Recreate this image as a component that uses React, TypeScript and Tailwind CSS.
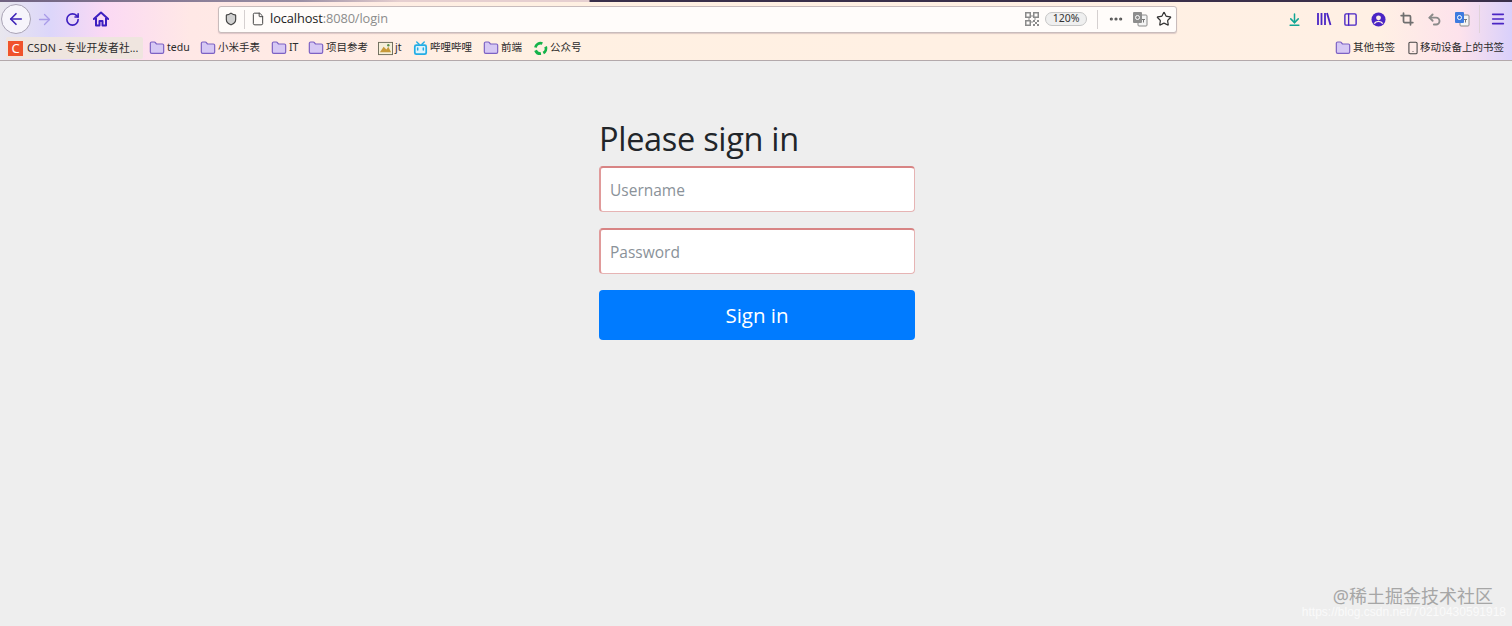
import React from 'react';
import {
  ArrowDownToLine,
  ArrowLeft,
  ArrowRight,
  Crop,
  Ellipsis,
  File,
  Folder,
  Menu,
  PanelLeft,
  RotateCw,
  Shield,
  Smartphone,
  Star,
  Undo2,
} from 'lucide-react';

const zh = { fontFamily: '"Noto Sans", "Noto Sans CJK SC", sans-serif' };

function FolderIcon() {
  return <Folder size={16} strokeWidth={1.8} className="shrink-0 fill-[#d6c8f4] text-[#7d62c4]" />;
}

function HomeIcon() {
  return (
    <svg width="16" height="16" viewBox="0 0 16 16" className="ml-[13px] shrink-0" fill="none" stroke="#3d1fc0" strokeWidth="2">
      <path d="M0.800 8L8 1.500 15.200 8" strokeLinecap="round" strokeLinejoin="round" />
      <path d="M3 7v7.500h3.500V10h3v4.500H13V7" strokeLinejoin="round" />
    </svg>
  );
}

function TranslateIcon({ blue }: { blue?: boolean }) {
  return (
    <svg width="16" height="16" viewBox="0 0 16 16" className="shrink-0">
      <rect x="6" y="4" width="9" height="11" rx="1" fill="#f4f4f4" stroke="#8a8a8a" />
      <rect x="1" y="1" width="9" height="11" rx="1" fill={blue ? '#3d7be0' : '#8d8d8d'} />
      <circle cx="5.5" cy="6.5" r="2" fill="none" stroke="#fff" strokeWidth="1" />
      <path d="M10 8.500h3M11.500 8.500v3" stroke="#777" strokeWidth="1" fill="none" />
    </svg>
  );
}

function QrIcon() {
  return (
    <svg width="14" height="14" viewBox="0 0 14 14" className="shrink-0" fill="#8b8b8b">
      <path d="M0 0h6v6H0zM1.500 1.500v3h3v-3zM8 0h6v6H8zM9.500 1.500v3h3v-3zM0 8h6v6H0zM1.500 9.500v3h3v-3zM8 8h2v2H8zM12 8h2v2h-2zM10 10h2v2h-2zM8 12h2v2H8zM12 12h2v2h-2zM6.500 3h1v2h-1zM3 6.500h2v1H3zM9 6.500h2v1H9zM6.500 9h1v2h-1z" />
    </svg>
  );
}

function LibraryIcon() {
  return (
    <svg width="16" height="16" viewBox="0 0 16 16" className="shrink-0" fill="none" stroke="#4a25c4" strokeWidth="1.800">
      <path d="M2 2v12M5.500 2v12M9 2v12M11 2l3.500 12" />
    </svg>
  );
}

function UserIcon() {
  return (
    <svg width="15" height="15" viewBox="0 0 16 16" className="shrink-0">
      <circle cx="8" cy="8" r="7.500" fill="#4a25c4" />
      <circle cx="8" cy="6.200" r="2.600" fill="#fdeee6" />
      <path d="M3.500 12.400c1-1.900 2.600-2.500 4.500-2.500s3.500.6 4.500 2.500" stroke="#fdeee6" strokeWidth="1.400" fill="none" />
    </svg>
  );
}

function BiliIcon() {
  return (
    <svg width="15" height="15" viewBox="0 0 16 16" className="shrink-0">
      <path d="M4 1l2.500 2.500M12 1L9.500 3.500" stroke="#23ade5" strokeWidth="1.500" strokeLinecap="round" />
      <rect x="1" y="3.500" width="14" height="11.500" rx="2.500" fill="#23ade5" />
      <rect x="2.800" y="5.300" width="10.400" height="7.800" rx="1" fill="#dff3fb" />
      <path d="M5 7.500v2M11 7.500v2" stroke="#23ade5" strokeWidth="1.600" strokeLinecap="round" />
    </svg>
  );
}

function GreenLogo() {
  return (
    <svg width="15" height="15" viewBox="0 0 16 16" className="shrink-0" fill="none" stroke="#16b34a" strokeWidth="3">
      <path d="M2.600 7a5.500 5.500 0 0 1 7.400-4.300" />
      <path d="M13.500 6a5.500 5.500 0 0 1-2.500 6.800" />
      <path d="M8.500 13.500a5.500 5.500 0 0 1-5.800-3.500" />
    </svg>
  );
}

function PictureIcon() {
  return (
    <svg width="15" height="15" viewBox="0 0 16 16" className="shrink-0">
      <rect x="0.500" y="1.500" width="15" height="13" fill="#f6efd9" stroke="#6b6b5a" />
      <path d="M2 12l4-6 3 3 2-3 3 6z" fill="#c79a3a" />
      <circle cx="11" cy="4.500" r="1.300" fill="#5a8f4a" />
    </svg>
  );
}

const bookmarks: { label: string; icon: React.ReactNode; width: string }[] = [
  { label: 'tedu', icon: <FolderIcon />, width: 'w-[51px]' },
  { label: '小米手表', icon: <FolderIcon />, width: 'w-[71px]' },
  { label: 'IT', icon: <FolderIcon />, width: 'w-[37px]' },
  { label: '项目参考', icon: <FolderIcon />, width: 'w-[70px]' },
  { label: 'jt', icon: <PictureIcon />, width: 'w-[35px]' },
  { label: '哔哩哔哩', icon: <BiliIcon />, width: 'w-[70px]' },
  { label: '前端', icon: <FolderIcon />, width: 'w-[50px]' },
  { label: '公众号', icon: <GreenLogo />, width: 'w-[60px]' },
];

function Toolbar() {
  return (
    <header
      className="h-[61px] border-b border-[#b3a9ab] bg-[linear-gradient(90deg,#e9e7ee_0px,#dcd6fa_50px,#fbd9f4_105px,#ffe8e6_190px,#fff0e2_500px,#fff0e4_1380px,#fde2ec_1460px,#d9d0fb_1512px)]"
      style={zh}
    >
      <div className="h-[2px] bg-[linear-gradient(90deg,#6f6180_0px,#9a8fa5_300px,#e6cfd0_400px,#e6cfd0_589px,#3a2f4a_590px,#3a2f4a_1512px)]" />
      <div className="flex h-[34px] items-center">
        <div className="flex w-[218px] items-center">
          <div className="ml-[1px] flex h-[30px] w-[30px] items-center justify-center rounded-full border border-[#a9a3b5] bg-[#f6f4fb]">
            <ArrowLeft size={18} strokeWidth={2.200} className="text-[#3d22b8]" />
          </div>
          <ArrowRight size={17} strokeWidth={1.800} className="ml-[5px] text-[#a99be8]" />
          <RotateCw size={15} strokeWidth={2.600} className="ml-[12px] text-[#3d1fc0]" />
          <HomeIcon />
        </div>
        <div className="flex h-[27px] w-[959px] items-center rounded-[3px] border border-[#c8bcbc] bg-[#fffcfa] text-[13px] shadow-[0_1px_1px_rgba(120,90,110,0.25)]">
          <Shield size={14} strokeWidth={2} className="ml-[5px] fill-[#d0d0d0] text-[#444]" />
          <div className="ml-[6px] h-[19px] w-px bg-[#d5d0d0]" />
          <File size={14} strokeWidth={1.700} className="ml-[6px] text-[#444]" />
          <div className="ml-[5px] flex-1 font-['Open_Sans',sans-serif] text-[12.800px] tracking-[-0.1px]">
            <span className="text-[#222]">localhost</span>
            <span className="text-[#8c8c8c]">:8080/login</span>
          </div>
          <QrIcon />
          <div className="ml-[6px] flex h-[14px] w-[42px] items-center justify-center rounded-full border border-[#c6c6c6] bg-[#efefef] text-[10.500px] text-[#333]">
            120%
          </div>
          <div className="ml-[10px] h-[19px] w-px bg-[#d5d0d0]" />
          <Ellipsis size={16} strokeWidth={2.800} className="ml-[10px] text-[#555]" />
          <div className="ml-[8px]">
            <TranslateIcon />
          </div>
          <Star size={16} strokeWidth={1.800} className="ml-[8px] mr-[4px] text-[#333]" />
        </div>
        <div className="ml-[110px] flex flex-1 items-center">
          <ArrowDownToLine size={15} strokeWidth={2.400} className="text-[#12a594]" />
          <div className="ml-[14px]">
            <LibraryIcon />
          </div>
          <PanelLeft size={15} strokeWidth={2.200} className="ml-[11px] text-[#4a25c4]" />
          <div className="ml-[13px]">
            <UserIcon />
          </div>
          <Crop size={14} strokeWidth={3} className="ml-[14px] text-[#6f6f6f]" />
          <Undo2 size={15} strokeWidth={3} className="ml-[13px] text-[#8a8a8a]" />
          <div className="ml-[12px]">
            <TranslateIcon blue />
          </div>
          <div className="ml-[9px] h-[28px] w-px bg-[#e0d2d8]" />
          <Menu size={16} strokeWidth={2.400} className="ml-[10px] text-[#4a25c4]" />
        </div>
      </div>
      <div className="flex h-[24px] items-center text-[10.500px] text-[#2b2b2b]">
        <div className="ml-[6px] flex h-[22px] w-[137px] items-center gap-[4px] rounded-[2px] bg-[#efe5df] pl-[2px]">
          <span className="flex h-[15px] w-[15px] shrink-0 items-center justify-center bg-[#f0532d] text-[13px] leading-none text-white">
            C
          </span>
          <span className="truncate text-[10.800px]">CSDN - 专业开发者社...</span>
        </div>
        <div className="ml-[6px] flex items-center">
          {bookmarks.map(b => (
            <div key={b.label} className={`flex items-center gap-[2px] ${b.width}`}>
              {b.icon}
              <span className="whitespace-nowrap">{b.label}</span>
            </div>
          ))}
        </div>
        <div className="ml-auto mr-[8px] flex items-center">
          <FolderIcon />
          <span className="ml-[2px] whitespace-nowrap">其他书签</span>
          <Smartphone size={14} strokeWidth={1.800} className="ml-[11px] text-[#444]" />
          <span className="whitespace-nowrap">移动设备上的书签</span>
        </div>
      </div>
    </header>
  );
}

function LoginForm() {
  const field =
    'h-[46px] w-full rounded-[4px] border border-[#e6b4b4] border-t-2 border-l-2 border-t-[#d88484] border-l-[#e09a9a] bg-white px-[9px] text-[15.500px] text-[#495057] outline-none placeholder:text-[#8a9299]';
  return (
    <form className="mx-auto w-[318px] pt-[57px] pl-[2px]" style={{ fontFamily: '"Open Sans", sans-serif' }}>
      <h2 className="mb-[6px] text-[32.500px] leading-[42px] font-normal tracking-[-0.3px] text-[#212529]">Please sign in</h2>
      <input type="text" placeholder="Username" className={field} />
      <input type="password" placeholder="Password" className={`${field} mt-[16px]`} />
      <button
        type="button"
        className="mt-[16px] h-[50px] w-full rounded-[4px] bg-[#007bff] pt-[1px] text-[20.500px] text-white"
      >
        Sign in
      </button>
    </form>
  );
}

export default function App() {
  return (
    <div className="relative h-[626px] overflow-hidden bg-[#eeeeee]">
      <Toolbar />
      <LoginForm />
      <div className="absolute right-[19px] bottom-[19px] text-[18px] leading-[22px] whitespace-nowrap text-[#a6a6a6]" style={zh}>
        @稀土掘金技术社区
      </div>
      <div className="absolute right-[6px] bottom-[7px] font-['Liberation_Sans',sans-serif] text-[12px] leading-[14px] whitespace-nowrap text-[#fafafa]">
        https://blog.csdn.net/70210430591918
      </div>
    </div>
  );
}
